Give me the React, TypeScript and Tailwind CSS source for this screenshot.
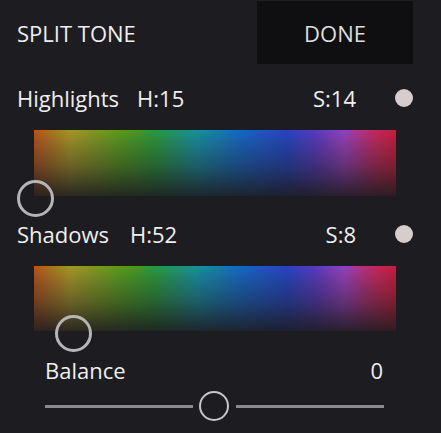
const HUE_BG =
  'bg-[linear-gradient(to_bottom,rgba(29,28,32,0.04),rgba(29,28,32,0.45)_55%,rgba(29,28,32,0.9)),linear-gradient(to_right,#b8561e,#aa9a2a_10%,#5a9e20_24%,#2f9c3a_33%,#1a92a4_45%,#1869c6_57%,#2646c4_70%,#5c3cc2_78%,#9e42bc_86%,#c42c62_94%,#cc1e3c)]';

function ToneRow({ label, hue, sat, hueGap }: { label: string; hue: number; sat: number; hueGap: string }) {
  return (
    <div className="flex h-[30px] items-center justify-between pl-[17px] pr-[28px] text-[22px] leading-[30px]">
      <div className="flex items-center">
        <span>{label}</span>
        <span className={hueGap}>H:{hue}</span>
      </div>
      <div className="flex items-center">
        <span>S:{sat}</span>
        <span className="ml-[39px] h-[18px] w-[18px] rounded-full bg-[#d6cdcd]" />
      </div>
    </div>
  );
}

function HueField({ height, thumb }: { height: string; thumb: string }) {
  return (
    <div className={`relative ml-[34px] w-[362px] ${height} ${HUE_BG}`}>
      <span className={`absolute h-[37px] w-[37px] rounded-full border-[3px] border-[#b5b5b5] ${thumb}`} />
    </div>
  );
}

export default function App() {
  return (
    <div
      className="h-[433px] w-[441px] overflow-hidden bg-[#1d1c20] text-[#efefef]"
      style={{ fontFamily: '"Open Sans", "Noto Sans", sans-serif' }}
    >
      <header className="flex h-[66px] items-center justify-between pl-[17px] pr-[28px]">
        <span className="text-[22px] leading-[30px]">SPLIT TONE</span>
        <button
          type="button"
          className="mb-[1px] flex h-[63px] w-[156px] items-center justify-center bg-[#0f0f11] text-[22px] leading-[30px] text-[#dedede]"
        >
          DONE
        </button>
      </header>

      <div className="mt-[17px]">
        <ToneRow label="Highlights" hue={15} sat={14} hueGap="ml-[18px]" />
      </div>
      <div className="mt-[17px]">
        <HueField height="h-[66px]" thumb="-left-[17px] top-[50px]" />
      </div>

      <div className="mt-[23px]">
        <ToneRow label="Shadows" hue={52} sat={8} hueGap="ml-[21px]" />
      </div>
      <div className="mt-[17px]">
        <HueField height="h-[65px]" thumb="left-[21px] top-[49px]" />
      </div>

      <div className="mt-[24px] flex h-[30px] items-center justify-between pl-[45px] pr-[58px] text-[22px] leading-[30px]">
        <span>Balance</span>
        <span>0</span>
      </div>

      <div className="mt-[6px] flex h-[30px] items-center pl-[45px] pr-[57px]">
        <span className="h-[3px] w-[148px] bg-[#8a8a8a]" />
        <span className="ml-[6px] h-[30px] w-[30px] shrink-0 rounded-full border-[2.5px] border-[#c8c8c8]" />
        <span className="ml-[7px] h-[3px] flex-1 bg-[#8a8a8a]" />
      </div>
    </div>
  );
}
